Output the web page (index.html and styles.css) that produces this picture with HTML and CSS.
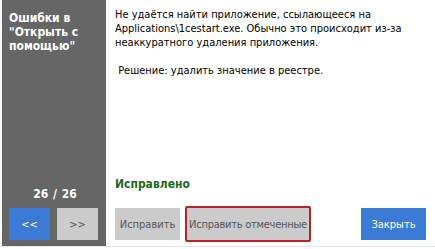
FILE: index.html
```html
<!DOCTYPE html>
<html>
<head>
<meta charset="utf-8">
<link rel="stylesheet" href="styles.css">
</head>
<body>
<div class="window">
  <aside class="side">
    <div class="title">Ошибки в "Открыть с помощью"</div>
    <div class="counter">26 / 26</div>
    <div class="nav">
      <button class="btn btn-blue nav-btn">&lt;&lt;</button>
      <button class="btn btn-gray nav-btn">&gt;&gt;</button>
    </div>
  </aside>
  <main class="main">
    <p class="msg">Не удаётся найти приложение, ссылающееся на Applications\1cestart.exe. Обычно это происходит из-за неаккуратного удаления приложения.</p>
    <p class="msg solution">&nbsp;Решение: удалить значение в реестре.</p>
    <div class="status">Исправлено</div>
    <div class="actions">
      <button class="btn btn-gray fix">Исправить</button>
      <div class="focus"><button class="btn btn-gray fix-all">Исправить отмеченные</button></div>
      <button class="btn btn-blue close">Закрыть</button>
    </div>
  </main>
</div>
</body>
</html>
```
FILE: styles.css
```css
html, body {
  margin: 0;
  padding: 0;
  background: #fff;
}
body {
  font-family: "DejaVu Sans Condensed", "DejaVu Sans", sans-serif;
  font-size: 11px;
  color: #000;
  width: 435px;
  height: 249px;
  overflow: hidden;
}
.window {
  display: flex;
  height: 246px;
  border-bottom: 1px solid #e4e4e4;
  padding-left: 2px;
}
.side {
  width: 104px;
  background: #666;
  color: #fff;
  display: flex;
  flex-direction: column;
  padding: 11px 0 6px 7px;
  box-sizing: border-box;
}
.title {
  font-weight: bold;
  font-size: 12px;
  line-height: 14px;
}
.counter {
  margin-top: auto;
  font-weight: bold;
  font-size: 12px;
  text-align: center;
  padding-right: 5px;
  margin-bottom: 7px;
  word-spacing: 1px;
}
.nav {
  display: flex;
  gap: 7px;
}
.btn {
  border: none;
  margin: 0;
  padding: 0;
  font-family: inherit;
  font-size: 11px;
  height: 32px;
  white-space: nowrap;
}
.btn-blue {
  background: #3b7bd6;
  color: #fff;
}
.btn-gray {
  background: #cbcbcb;
  color: #555;
}
.nav-btn {
  width: 41px;
}
.main {
  flex: 1;
  display: flex;
  flex-direction: column;
  padding: 8px 9px 4px 9px;
}
.msg {
  margin: 0;
  line-height: 14px;
}
.solution {
  margin-top: 14px;
}
.status {
  margin-top: auto;
  color: #1b6a1b;
  font-weight: bold;
  font-size: 12px;
  margin-bottom: 15px;
}
.actions {
  display: flex;
  align-items: center;
}
.fix {
  width: 65px;
}
.focus {
  margin-left: 5px;
  border: 2px solid #b8222b;
  border-radius: 2px;
  display: flex;
}
.fix-all {
  width: 122px;
  letter-spacing: -0.25px;
}
.close {
  margin-left: auto;
  width: 65px;
}
```
